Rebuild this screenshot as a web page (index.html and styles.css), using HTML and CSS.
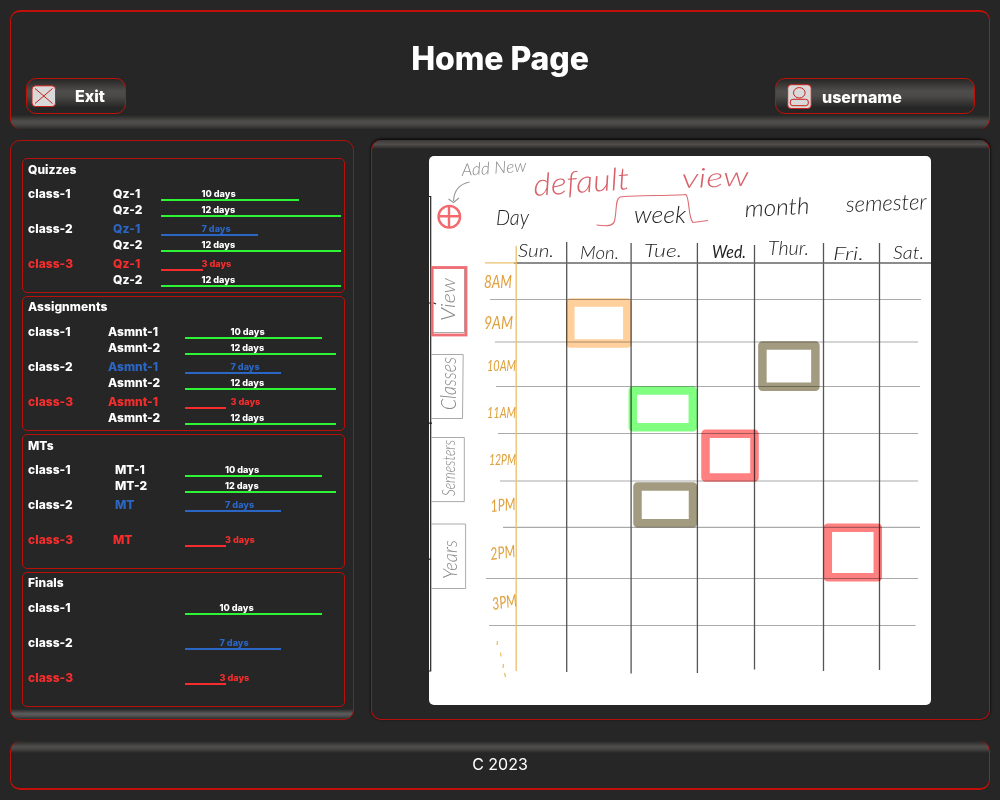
FILE: index.html
```html
<!DOCTYPE html>
<html lang="en">
<head>
<meta charset="utf-8">
<title>Home Page</title>
<link rel="stylesheet" href="styles.css">
</head>
<body>
<header class="header">
  <h1 class="title">Home Page</h1>
  <div class="actions">
    <button class="btn exit">
      <svg class="icon" width="25" height="22" viewBox="0 0 25 22"><rect class="tile" x="1" y=".8" width="23.5" height="20.700" rx="3.5"/><path class="ink" d="M4 3.500 21.500 18.500M21.500 3.500 4 18.500"/></svg>
      <span>Exit</span>
    </button>
    <button class="btn user">
      <svg class="icon" width="25" height="25" viewBox="0 0 25 25"><rect class="tile" x=".7" y=".7" width="23.500" height="23.800" rx="3.500"/><ellipse class="ink" cx="12.300" cy="8.800" rx="5.800" ry="5.200"/><rect class="ink" x="3.300" y="15.300" width="18" height="6.400" rx="2.600"/></svg>
      <span>username</span>
    </button>
  </div>
</header>
<div class="columns">
  <aside class="sidebar">
    <section class="panel quizzes">
      <h2>Quizzes</h2>
      <div class="group"><b>class-1</b>
        <div class="row"><span>Qz-1</span><i class="days d10">10 days</i></div>
        <div class="row"><span>Qz-2</span><i class="days d12">12 days</i></div></div>
      <div class="group"><b>class-2</b>
        <div class="row blue"><span>Qz-1</span><i class="days d7">7 days</i></div>
        <div class="row"><span>Qz-2</span><i class="days d12">12 days</i></div></div>
      <div class="group"><b class="red">class-3</b>
        <div class="row red"><span>Qz-1</span><i class="days d3">3 days</i></div>
        <div class="row"><span>Qz-2</span><i class="days d12">12 days</i></div></div>
    </section>
    <section class="panel assignments">
      <h2>Assignments</h2>
      <div class="group"><b>class-1</b>
        <div class="row"><span>Asmnt-1</span><i class="days d10">10 days</i></div>
        <div class="row"><span>Asmnt-2</span><i class="days d12">12 days</i></div></div>
      <div class="group"><b>class-2</b>
        <div class="row blue"><span>Asmnt-1</span><i class="days d7">7 days</i></div>
        <div class="row"><span>Asmnt-2</span><i class="days d12">12 days</i></div></div>
      <div class="group"><b class="red">class-3</b>
        <div class="row red"><span>Asmnt-1</span><i class="days d3">3 days</i></div>
        <div class="row"><span>Asmnt-2</span><i class="days d12">12 days</i></div></div>
    </section>
    <section class="panel mts">
      <h2>MTs</h2>
      <div class="group"><b>class-1</b>
        <div class="row"><span>MT-1</span><i class="days d10">10 days</i></div>
        <div class="row"><span>MT-2</span><i class="days d12">12 days</i></div></div>
      <div class="group"><b>class-2</b>
        <div class="row blue"><span>MT</span><i class="days d7">7 days</i></div></div>
      <div class="group"><b class="red">class-3</b>
        <div class="row red"><span class="outdent">MT</span><i class="days d3">3 days</i></div></div>
    </section>
    <section class="panel finals">
      <h2>Finals</h2>
      <div class="group"><b>class-1</b><div class="row"><span></span><i class="days d10">10 days</i></div></div>
      <div class="group"><b>class-2</b><div class="row blue"><span></span><i class="days d7">7 days</i></div></div>
      <div class="group"><b class="red">class-3</b><div class="row red"><span></span><i class="days d3">3 days</i></div></div>
    </section>
  </aside>
  <main class="main">
    <svg class="calendar" width="502" height="549" viewBox="429 156 502 549">
      <path class="hourlines" d="M490 299.500H921M495 342H918M496 386.500H920M498 433.500H918M500 481H918M503 527.400H920M486 578.500H918M489 625.500H915.500"/>
      <path class="daylines" d="M566.700 242V672M631.100 243V673.500M697.400 243V673M754.500 245V669.500M823.500 243V671M879.500 243V670"/>
      <path class="topline" d="M514 263H931"/>
      <path class="gold" d="M516.200 246V671M485 262.800H516"/>
      <path class="gold" d="M497.500 641l-.5 4M500.500 652.500l.5 4M503.500 664l-.5 4M504.500 673l1 4"/>
      <path class="spine" d="M429 196.500H430.700V671H429M429 303H434L436 304M429 423.200H432M429 559.200H431"/>
      <path class="tabs" d="M431 354.500H463.200L462.500 418.500H431M431 437.500H464.300V501.600H431M431 524H465.600V588.500H431M431 268.500H464.500V332.500H431"/>
      <rect class="viewtab" x="432.200" y="267.500" width="33.800" height="67.500"/>
      <g class="marks">
        <rect x="570.300" y="302.500" width="57" height="41" stroke="#ffd09c"/>
        <rect x="632.800" y="390.500" width="60" height="36.800" stroke="#80ff80"/>
        <rect x="762.400" y="345.400" width="53" height="41.300" stroke="#a29b80"/>
        <rect x="705.500" y="433.700" width="49" height="43.700" stroke="#ff8080"/>
        <rect x="637.500" y="486.500" width="55.500" height="36.800" stroke="#a29b80"/>
        <rect x="827.800" y="527.700" width="50" height="49.600" stroke="#ff8080"/>
      </g>
      <g class="plus"><circle cx="449.300" cy="216.700" r="10.800"/><path d="M449 206.500V228M438.500 216.300H460"/></g>
      <path class="arrow" d="M469.500 182C460 184 454 190 453.500 201M448.500 199L453.500 202.500L459 198"/>
      <path class="bracket" d="M596.500 225C604 226 613 227 614.500 221C617 211 615 199 620 197C632 195 671 196 686 194.500C690 200 688 218 693 222.500L708 220.500"/>
      <g class="hand gray">
        <text transform="translate(462 176) rotate(-4)" font-size="17" textLength="65" lengthAdjust="spacingAndGlyphs">Add New</text>
        <text transform="translate(455 321) rotate(-90)" font-size="20" textLength="43" lengthAdjust="spacingAndGlyphs">View</text>
        <text transform="translate(456 410) rotate(-90)" font-size="21" textLength="53" lengthAdjust="spacingAndGlyphs">Classes</text>
        <text transform="translate(455 496) rotate(-90)" font-size="17" textLength="56" lengthAdjust="spacingAndGlyphs">Semesters</text>
        <text transform="translate(457 579) rotate(-90)" font-size="19" textLength="39" lengthAdjust="spacingAndGlyphs">Years</text>
      </g>
      <g class="hand rose">
        <text transform="translate(534 196) rotate(-4)" font-size="31" textLength="96" lengthAdjust="spacingAndGlyphs">default</text>
        <text transform="translate(682 188) rotate(-2)" font-size="27" textLength="67" lengthAdjust="spacingAndGlyphs">view</text>
      </g>
      <g class="hand ink-text">
        <text x="496" y="225" font-size="22" textLength="33" lengthAdjust="spacingAndGlyphs">Day</text>
        <text x="634" y="223" font-size="23" textLength="52" lengthAdjust="spacingAndGlyphs">week</text>
        <text transform="translate(745 217) rotate(-3)" font-size="23" textLength="65" lengthAdjust="spacingAndGlyphs">month</text>
        <text transform="translate(846 212) rotate(-2)" font-size="22" textLength="81" lengthAdjust="spacingAndGlyphs">semester</text>
        <text x="518" y="257" font-size="18" textLength="36" lengthAdjust="spacingAndGlyphs">Sun.</text>
        <text x="580" y="259" font-size="18" textLength="39" lengthAdjust="spacingAndGlyphs">Mon.</text>
        <text x="644" y="257" font-size="18" textLength="38" lengthAdjust="spacingAndGlyphs">Tue.</text>
        <text class="strong" x="712" y="258" font-size="18" textLength="34" lengthAdjust="spacingAndGlyphs">Wed.</text>
        <text x="768" y="255" font-size="19" textLength="41" lengthAdjust="spacingAndGlyphs">Thur.</text>
        <text x="833" y="260" font-size="18" textLength="31" lengthAdjust="spacingAndGlyphs">Fri.</text>
        <text x="893" y="259" font-size="18" textLength="31" lengthAdjust="spacingAndGlyphs">Sat.</text>
      </g>
      <g class="hand amber">
        <text x="484" y="288" font-size="17" textLength="28" lengthAdjust="spacingAndGlyphs">8AM</text>
        <text x="484" y="329" font-size="18" textLength="29" lengthAdjust="spacingAndGlyphs">9AM</text>
        <text x="487" y="371" font-size="16" textLength="29" lengthAdjust="spacingAndGlyphs">10AM</text>
        <text x="487" y="418" font-size="16" textLength="29" lengthAdjust="spacingAndGlyphs">11AM</text>
        <text x="489" y="465" font-size="16" textLength="27" lengthAdjust="spacingAndGlyphs">12PM</text>
        <text transform="translate(491 512) rotate(-5)" font-size="17" textLength="25" lengthAdjust="spacingAndGlyphs">1PM</text>
        <text transform="translate(491 560) rotate(-7)" font-size="17" textLength="25" lengthAdjust="spacingAndGlyphs">2PM</text>
        <text transform="translate(493 610) rotate(-9)" font-size="17" textLength="25" lengthAdjust="spacingAndGlyphs">3PM</text>
      </g>
    </svg>
  </main>
</div>
<footer class="footer">C 2023</footer>
</body>
</html>
```
FILE: styles.css
```css
* { box-sizing: border-box; }
body {
  margin: 0;
  padding: 10px;
  height: 800px;
  overflow: hidden;
  background: #262626;
  color: #fff;
  font-family: Inter, "Liberation Sans", sans-serif;
}
.header {
  height: 119px;
  padding-top: 27px;
  border: 1px solid #c11007;
  border-top-width: 2px;
  border-bottom: 0;
  border-radius: 10px;
  background: linear-gradient(#262626, #4f4d4b 45%, #4c4a48 65%, #2c2c2b) bottom / 100% 14px no-repeat;
}
.title {
  margin: 0;
  font-size: 32px;
  font-weight: 800;
  letter-spacing: -.1px;
  line-height: 39px;
  text-align: center;
}
.actions {
  display: flex;
  justify-content: space-between;
  padding: 0 14px 0 15px;
}
.btn {
  display: flex;
  align-items: center;
  height: 36px;
  padding: 0;
  border: 1px solid #c11007;
  border-radius: 10px;
  background: linear-gradient(#262626, #4f4d4b 35%, #4c4a48 50%, #262626 84%);
  color: #fff;
  font: bold 16px Inter, sans-serif;
}
.exit { width: 100px; padding-left: 4px; gap: 19px; }
.exit span { font-weight: 800; }
.user { width: 200px; padding-left: 11px; gap: 10px; }
.user span { padding-top: 2px; font-weight: 800; }
.icon { display: block; }
.tile { fill: #d9d9d9; stroke: #c8201a; }
.ink { fill: none; stroke: #c8201a; stroke-width: 1; }

.columns {
  display: grid;
  grid-template-columns: 344px 619px;
  gap: 17px;
  height: 580px;
  margin-top: 11px;
}
.sidebar {
  display: flex;
  flex-direction: column;
  gap: 3px;
  padding: 17px 8px 0 11px;
  border: 1px solid #b01009;
  border-radius: 10px;
  background: linear-gradient(#262626, #5a5a5a 45%, #545454 65%, #303030) bottom / 100% 10px no-repeat;
}
.panel {
  height: 135px;
  padding: 3px 0 0 5px;
  border: 1px solid #b81009;
  border-radius: 5px;
  font-size: 12px;
  font-weight: 800;
  line-height: 16px;
}
.panel h2 { margin: 0 0 8px; font-size: 12px; font-weight: 800; letter-spacing: .05px; line-height: 16px; }
.assignments, .finals { padding-top: 2px; }
.assignments h2, .finals h2 { margin-bottom: 9px; }
.group {
  display: grid;
  grid-template-columns: var(--item) 1fr;
  grid-auto-rows: 16px;
  height: 35px;
}
.group b { font-weight: 800; letter-spacing: .05px; }
.row { grid-column: 2; display: grid; grid-template-columns: var(--bar) 1fr; }
.days {
  width: var(--w);
  height: 15px;
  text-indent: var(--label);
  border-bottom: 2px solid #2df535;
  font-size: 9.1px;
  font-style: normal;
  line-height: 16px;
  white-space: nowrap;
}
.d10 { --w: 137.5px; }
.d12 { --w: 151px; }
.d7 { --w: 96.5px; }
.d3 { --w: 41.5px; }
.quizzes { --item: 85px; --bar: 48px; --label: 40.5px; }
.quizzes .d12 { --w: 180px; }
.assignments { --item: 80px; --bar: 76.5px; --label: 46px; }
.mts { --item: 87px; --bar: 69.5px; --label: 40.5px; }
.finals { --item: 87px; --bar: 69.5px; --label: 35px; }
.outdent { margin-left: -2px; }
.blue { color: #2b66c4; }
.red { color: #f62d2d; }
.blue .days { border-color: #2b66c4; }
.red .days { border-color: #f62d2d; }

.main {
  padding: 16px 0 0 57px;
  border: 1px solid #b81009;
  border-top: 0;
  border-radius: 10px;
  background: linear-gradient(#3b3a39, #504e4c 50%, #262626) top / 100% 9px no-repeat;
  box-shadow: 0 -1px 3px #000;
}
.calendar {
  display: block;
  border-radius: 5px;
  background: #fff;
}
.calendar path, .plus circle, .marks rect, .viewtab { fill: none; }
.hourlines { stroke: #aaa; stroke-width: 1.2; }
.daylines { stroke: #555; stroke-width: 1.3; }
.topline { stroke: #666; stroke-width: 1.4; }
.gold { stroke: #eac06c; stroke-width: 1.3; }
.spine { stroke: #222; stroke-width: 1.2; }
.tabs { stroke: #aaa; stroke-width: 1; }
.viewtab { stroke: #f06f75; stroke-width: 2.8; }
.marks rect { stroke-width: 8.5; stroke-linejoin: round; mix-blend-mode: multiply; }
.plus { stroke: #f3696e; stroke-width: 2.4; }
.arrow { stroke: #999; stroke-width: 1.1; }
.bracket { stroke: #dc6c72; stroke-width: 1.1; }
.hand { font-family: Lato, sans-serif; font-style: italic; font-weight: 300; }
.gray { fill: #888; }
.rose { fill: #d8616a; }
.ink-text { fill: #222; }
.amber { fill: #e0a03c; font-weight: 400; }
.strong { font-weight: 400; }

.footer {
  height: 49px;
  margin-top: 21px;
  padding-top: 14px;
  border: 1px solid #c11007;
  border-top: 0;
  border-bottom-width: 2px;
  border-radius: 10px;
  background: linear-gradient(#262626, #504e4c 45%, #4a4846 65%, #262626) top / 100% 12px no-repeat;
  font-size: 16px;
  line-height: 19px;
  text-align: center;
}
```
